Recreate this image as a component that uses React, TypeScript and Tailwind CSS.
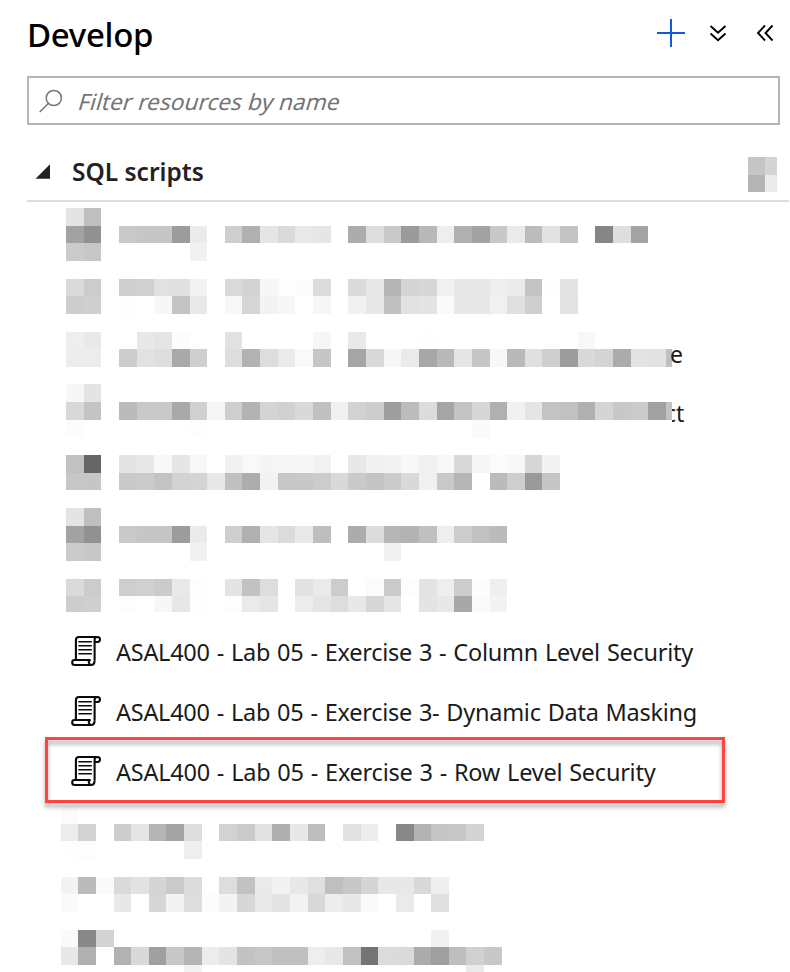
import React from "react";

const CELL = 300 / 17;

const UPPER = [
  "e4 bf",
  "a2 91 .. c9 c6 c6 9c eb .. ce b0 e5 da e9 e6 .. ac dd c9 9b b8 ee b0 a2 c8 ea bc e1 c3 .. 86 de a3",
  "cb c7 .. .. .. .. .. f1",
  "",
  "da cc .. ce d0 e1 e0 f2 .. da d3 f7 fd fc dc .. da e7 b4 d4 d7 f0 e7 e7 ee eb c3 fe e4",
  "cd cf .. fd .. f7 c4 e9 .. f8 d6 f3 f7 .. f6 .. f1 e7 c0 e1 e4 fa e8 e7 f0 e0 ce .. e3",
  "",
  "ee e9 .. .. e8 e5 fc .. .. e2 .. .. .. .. f6 .. e9 .. .. .. fe .. .. .. .. .. .. .. .. f8",
  "ed ec .. cd e1 de a9 cf .. dd b2 dd ea f9 c6 .. a5 d9 f7 ea a7 b8 e5 c6 f8 b9 e0 cf 9c d9 d4 ab e4 e2 bf",
  "",
  "f7 e4",
  "d8 c4 .. bb c9 c9 a9 d0 f6 ce b3 d4 d1 d9 c0 f0 d2 cd 9e bc dc a5 c3 d7 b0 f1 e5 c3 c1 b0 d5 c8 cb a1 c3",
  "fc .. .. .. .. .. .. fd .. .. .. .. .. .. .. .. .. .. .. .. .. .. .. fa",
  "",
  "c1 66 .. e4 e7 f8 e6 f8 .. f1 f9 f5 f6 f7 f2 .. e8 f1 f3 f8 f0 f8 d9 f6 fb f8 d6 f3",
  "c7 c6 .. c9 cb c3 d2 d4 e7 c0 ad f2 c8 c8 cc d9 ca c4 cb d9 f1 c9 b6 .. bb ce 9a c5",
  "",
  "e4 bf",
  "a2 91 .. c9 c6 c6 9c eb .. ce b0 e5 db e9 be .. ac dc b6 b3 c0 ee cd c1 bb",
  "cb c7 .. .. .. .. .. f1 .. .. .. .. .. .. .. .. .. .. f1",
  "",
  "da cc .. ce d0 cb e9 fd .. e4 c2 dd .. e1 ea cc .. fb cb fd e3 ee cc fc ef",
  "cd cf .. fd .. f7 e7 fe .. fd ea e5 .. ec e5 dd e8 d6 e5 .. e4 e8 a8 fa f3",
];

const LOWER = [
  "fb",
  "ec d2 .. cd e5 b5 a3 dd .. d2 cb e1 af e8 bd .. e1 ed .. 87 b3 c5 c8 d3",
  "fe fd .. .. .. .. .. ee",
  "",
  "f3 bb fa da e2 d5 cb db .. dd c2 ea f1 e8 df bf c8 d5 e8 e8 d9 ef",
  "fa .. .. e8 .. d6 f3 dd fc f3 d7 e9 e4 f2 d8 ed e8 fa .. ea .. df",
  "",
  "fa 88 d3 .. .. .. .. .. .. .. .. .. .. .. .. .. .. .. .. .. .. f0",
  "e8 b0 .. b2 d9 a0 c8 b4 ec e4 c2 c7 c0 c0 ee e8 c1 74 db da ab 9f be d0 c8",
  ".. .. .. .. .. .. .. f2 .. .. .. .. .. .. .. .. .. .. .. .. .. .. .. ea",
];

const SCRIPTS: { name: string; spacing: string; selected?: boolean }[] = [
  { name: "ASAL400 - Lab 05 - Exercise 3 - Column Level Security", spacing: "tracking-[-0.27px]" },
  { name: "ASAL400 - Lab 05 - Exercise 3- Dynamic Data Masking", spacing: "tracking-[-0.27px]" },
  { name: "ASAL400 - Lab 05 - Exercise 3 - Row Level Security", spacing: "tracking-[-0.25px]", selected: true },
];

/* Pixelated block: each row is a list of grey levels, snapped to whole pixels. */
function Mosaic({ rows, x, y }: { rows: string[]; x: number; y: number }) {
  const edge = (start: number, i: number) => Math.round(start + i * CELL);
  return (
    <div className="flex flex-col">
      {rows.map((row, j) => (
        <div key={j} className="flex shrink-0" style={{ height: edge(y, j + 1) - edge(y, j) }}>
          {row.split(" ").map((level, i) => (
            <div
              key={i}
              className="shrink-0"
              style={{
                width: edge(x, i + 1) - edge(x, i),
                backgroundColor: level.length === 2 && level !== ".." ? `#${level}${level}${level}` : undefined,
              }}
            />
          ))}
        </div>
      ))}
    </div>
  );
}

function ScriptIcon() {
  return (
    <svg className="mb-[2px] h-8 w-8 shrink-0" viewBox="0 0 32 32" fill="none" stroke="#0a0a0a" strokeWidth="2.1" strokeLinejoin="round">
      <path d="M26.5 2H8Q4.9 2 4.9 5V25" />
      <path d="M23.6 25.5V5Q23.6 2 26.4 2Q29 2 29 4.6Q29 7 26.5 7H23.6" />
      <path d="M19.5 25H3.2Q1.2 25 1.2 27.5Q1.2 30 3.5 30H20Q23.6 30 23.6 25.5" />
      <path d="M19.5 25Q17.6 25.6 17.8 27.5Q18 29.5 20 29.8" />
      <path d="M7.4 6.8H20.8M7.4 10.8H20.8M7.4 14.8H20.8M7.4 18.8H20.8" strokeWidth="1.6" />
    </svg>
  );
}

export default function App() {
  return (
    <div className="h-[972px] w-[790px] overflow-hidden bg-white font-['Noto_Sans','Open_Sans',sans-serif] text-[#1b1b1b]">
      <header className="flex h-[76px] items-start justify-between pl-[27px] pr-[16px]">
        <h1 className="pt-[11px] text-[33px] font-medium leading-[48px] tracking-[-0.3px] text-black">Develop</h1>
        <div className="flex items-center pt-[18px]">
          <svg className="mr-[23px] h-[30px] w-[30px]" viewBox="0 0 30 30" stroke="#0f5bd7" strokeWidth="2">
            <path d="M1 15H29M15 1V29" />
          </svg>
          <svg className="mr-[29px] h-[18px] w-[18px]" viewBox="0 0 18 18" fill="none" stroke="#000" strokeWidth="1.9">
            <path d="M1.5 2L9 8.8L16.5 2M1.5 9.5L9 16.3L16.5 9.5" />
          </svg>
          <svg className="h-[18px] w-[18px]" viewBox="0 0 18 18" fill="none" stroke="#000" strokeWidth="1.9">
            <path d="M9 1.5L2 9L9 16.5M16.5 1.5L9.5 9L16.5 16.5" />
          </svg>
        </div>
      </header>

      <div className="ml-[27px] flex h-[49px] w-[753px] items-center border-2 border-[#b5b5b5] pl-[9px]">
        <svg className="h-[26px] w-[26px]" viewBox="0 0 26 26" fill="none" stroke="#777" strokeWidth="1.5">
          <circle cx="15.8" cy="10" r="7.6" />
          <path d="M10.3 15.5L1.7 24" />
        </svg>
        <span className="ml-[15px] mt-[3px] inline-block -skew-x-[16deg] whitespace-nowrap text-[22.5px] leading-[32px] tracking-[0.1px] text-[#757575]">
          Filter resources by name
        </span>
      </div>

      <div className="ml-[27px] mr-px flex h-[77px] items-center border-b-2 border-[#ddd] pr-[12px] pt-[18px]">
        <svg className="ml-[8px] h-[15px] w-[15px]" viewBox="0 0 15 15">
          <path d="M.5 14.8L15 .3V14.8Z" fill="#222" />
        </svg>
        <h2 className="ml-[22px] flex-1 text-[24.5px] font-semibold leading-[32px] text-[#222]">SQL scripts</h2>
        <div className="mt-[6px] grid h-[35px] w-[29px] grid-cols-[17px_12px] grid-rows-[18px_17px]">
          <div className="bg-[#c5c5c5]" />
          <div className="bg-[#d4d4d4]" />
          <div className="bg-[#b4b4b4]" />
          <div className="bg-[#ebebeb]" />
        </div>
      </div>

      <div className="relative ml-[66px] mt-[6px] h-[404px] w-[606px]">
        <div className="h-full w-full overflow-hidden">
          <Mosaic rows={UPPER} x={66} y={207.98} />
        </div>
        <span className="absolute left-[604px] top-[130px] text-[23px] leading-[32px]">e</span>
        <div className="absolute left-[606px] top-[189px] w-[20px] overflow-hidden text-[23px] leading-[32px]">
          <span className="-ml-[7px]">ct</span>
        </div>
      </div>

      <ul className="pt-[10px]">
        {SCRIPTS.map((script) => (
          <li key={script.name} className="relative flex h-[60px] items-center pl-[71px]">
            <ScriptIcon />
            <span className={`ml-[13px] whitespace-nowrap text-[23.5px] leading-[32px] [word-spacing:1.15px] ${script.spacing}`}>{script.name}</span>
            {script.selected && (
              <div className="absolute left-[45px] top-[-5px] h-[66px] w-[680px] border-[3px] border-[#ff4343] drop-shadow-[0_4px_2px_rgba(0,0,0,0.35)]" />
            )}
          </li>
        ))}
      </ul>

      <div className="ml-[61px] mt-[4px]">
        <Mosaic rows={LOWER} x={60.6} y={806} />
      </div>
    </div>
  );
}
